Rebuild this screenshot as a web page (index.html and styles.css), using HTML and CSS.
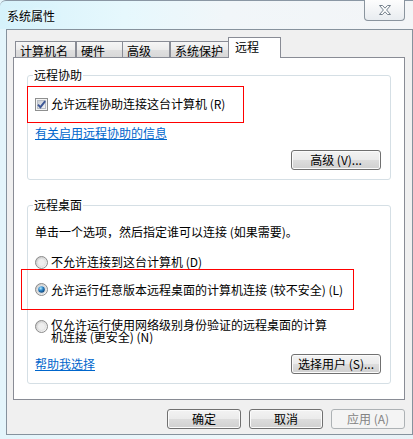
FILE: index.html
```html
<!DOCTYPE html>
<html lang="zh-CN">
<head>
<meta charset="utf-8">
<title>系统属性</title>
<link rel="stylesheet" href="styles.css">
</head>
<body>
<div class="window">
  <div class="titlebar">
    <span class="title">系统属性</span>
    <div class="close">
      <svg width="12" height="10" viewBox="0 0 12 10"><polygon points="0.5,0.5 3.5,0.5 6,3.2 8.5,0.5 11.5,0.5 7.6,5 11.5,9.5 8.5,9.5 6,6.8 3.5,9.5 0.5,9.5 4.4,5" fill="#ffffff" stroke="#74808c" stroke-width="1" stroke-linejoin="round"/></svg>
    </div>
  </div>
  <div class="client">
    <div class="tabs">
      <div class="tab t1">计算机名</div>
      <div class="tab t2">硬件</div>
      <div class="tab t3">高级</div>
      <div class="tab t4">系统保护</div>
      <div class="tab active t5">远程</div>
    </div>
    <div class="panel">
      <fieldset class="group g1">
        <legend>远程协助</legend>
        <div class="highlight hl1">
          <svg class="ctl" width="13" height="13" viewBox="0 0 13 13">
            <defs><linearGradient id="cbg" x1="0" y1="0" x2="1" y2="1"><stop offset="0" stop-color="#c5cad1"/><stop offset="1" stop-color="#f7f7f7"/></linearGradient></defs>
            <rect x="0.5" y="0.5" width="12" height="12" fill="#f4f4f4" stroke="#8e8f8f"/>
            <rect x="2.5" y="2.5" width="8" height="8" fill="url(#cbg)" stroke="#b9bec6"/>
            <path d="M3 6.6 L5.4 9.2 L10.2 3.2" fill="none" stroke="#3d5796" stroke-width="1.9"/>
          </svg>
          <span class="lbl">允许远程协助连接这台计算机 (R)</span>
        </div>
        <a class="link l1" href="#">有关启用远程协助的信息</a>
        <div class="btnrow"><button class="btn wide">高级 (V)...</button></div>
      </fieldset>
      <fieldset class="group g2">
        <legend>远程桌面</legend>
        <div class="desc">单击一个选项，然后指定谁可以连接 (如果需要)。</div>
        <div class="opt opt1">
          <svg class="ctl" width="13" height="13" viewBox="0 0 13 13">
            <defs><linearGradient id="r1" x1="0" y1="0" x2="1" y2="1"><stop offset="0" stop-color="#c4c4c4"/><stop offset="1" stop-color="#ffffff"/></linearGradient></defs>
            <circle cx="6.5" cy="6.5" r="6" fill="url(#r1)" stroke="#8b8b8b"/>
            <circle cx="6.5" cy="6.5" r="4" fill="#eeeeee" stroke="#d8d8d8" stroke-width="0.6"/>
          </svg>
          <span class="lbl">不允许连接到这台计算机 (D)</span>
        </div>
        <div class="highlight hl2">
          <svg class="ctl" width="13" height="13" viewBox="0 0 13 13">
            <defs>
              <linearGradient id="r2" x1="0" y1="0" x2="1" y2="1"><stop offset="0" stop-color="#c4c4c4"/><stop offset="1" stop-color="#ffffff"/></linearGradient>
              <radialGradient id="dot" cx="0.38" cy="0.32" r="0.75"><stop offset="0" stop-color="#b4ecff"/><stop offset="0.45" stop-color="#2f86c8"/><stop offset="1" stop-color="#0a3a6c"/></radialGradient>
            </defs>
            <circle cx="6.5" cy="6.5" r="6" fill="url(#r2)" stroke="#8b8b8b"/>
            <circle cx="6.5" cy="6.5" r="4.2" fill="#f2f2f2" stroke="#d0d0d0" stroke-width="0.6"/>
            <circle cx="6.5" cy="6.5" r="3.3" fill="url(#dot)"/>
          </svg>
          <span class="lbl">允许运行任意版本远程桌面的计算机连接 (较不安全) (L)</span>
        </div>
        <div class="opt opt3">
          <svg class="ctl" width="13" height="13" viewBox="0 0 13 13">
            <defs><linearGradient id="r3" x1="0" y1="0" x2="1" y2="1"><stop offset="0" stop-color="#c4c4c4"/><stop offset="1" stop-color="#ffffff"/></linearGradient></defs>
            <circle cx="6.5" cy="6.5" r="6" fill="url(#r3)" stroke="#8b8b8b"/>
            <circle cx="6.5" cy="6.5" r="4" fill="#eeeeee" stroke="#d8d8d8" stroke-width="0.6"/>
          </svg>
          <span class="lbl wrap">仅允许运行使用网络级别身份验证的远程桌面的计算机连接 (更安全) (N)</span>
        </div>
        <div class="row2">
          <a class="link" href="#">帮助我选择</a>
          <button class="btn wide">选择用户 (S)...</button>
        </div>
      </fieldset>
    </div>
    <div class="footer">
      <button class="btn foot">确定</button>
      <button class="btn foot">取消</button>
      <button class="btn foot" disabled>应用 (A)</button>
    </div>
  </div>
</div>
</body>
</html>
```
FILE: styles.css
```css
* { box-sizing: border-box; }
html, body { margin: 0; padding: 0; }
body {
  width: 413px;
  height: 439px;
  overflow: hidden;
  background: #e2f3f9;
  font-family: "Noto Sans CJK SC", "Noto Sans", sans-serif;
  font-size: 12px;
  color: #000;
}
.window {
  width: 413px;
  height: 439px;
  display: flex;
  flex-direction: column;
  background: linear-gradient(to right, #e4f5fb 0%, #eef7fa 60%, #e8f1f6 100%);
}
.titlebar {
  height: 29px;
  display: flex;
  justify-content: space-between;
  align-items: flex-start;
  border-top: 1px solid #8a97a4;
  border-top-left-radius: 6px;
  background: linear-gradient(to right, #d6f2fb 0%, #e6f8fd 30%, #f1f6f9 55%, #f3f5f7 100%);
}
.title {
  padding: 8px 0 0 7px;
  line-height: 14px;
  text-shadow: 0 0 5px #ffffff, 0 0 8px #ccf3ff;
}
.close {
  width: 41px;
  height: 21px;
  margin: -1px 8px 0 0;
  border: 1px solid #8a949e;
  border-top: none;
  border-radius: 0 0 4px 4px;
  background: linear-gradient(#fdfdfd, #e8ecf0);
  display: flex;
  justify-content: center;
  align-items: center;
  padding-bottom: 1px;
}
.close svg { display: block; }
.client {
  margin-left: 6px;
  width: 407px;
  height: 406px;
  border: 1px solid #86929d;
  background: #f0f0f0;
  padding-top: 7px;
}
.tabs {
  display: flex;
  align-items: flex-end;
  height: 21px;
  margin-left: 8px;
  margin-bottom: -1px;
  position: relative;
  z-index: 1;
}
.tab {
  height: 17px;
  border: 1px solid #898c95;
  padding: 2px 0 0 4px;
  line-height: 14px;
  background: linear-gradient(#f6f6f6 0%, #ececec 50%, #e0e0e0 51%, #d8d8d8 100%);
  white-space: nowrap;
}
.t1 { width: 61px; }
.t2 { width: 47px; }
.t3 { width: 48px; margin-left: -1px; }
.t4 { width: 59px; }
.tab.active {
  height: 21px;
  width: 53px;
  margin-left: -1px;
  border-bottom: none;
  background: #ffffff;
  padding: 2px 0 0 6px;
}
.panel {
  margin-left: 6px;
  width: 392px;
  height: 343px;
  border: 1px solid #898c95;
  background: #ffffff;
  padding: 11px 13px 0;
}
.group {
  margin: 0;
  padding: 0 0 9px;
  border: 1px solid #d5dfe5;
  border-radius: 3px;
  min-width: 0;
}
.group legend {
  margin-left: 5px;
  padding: 0 1px;
  line-height: 12px;
}
.g2 { margin-top: 19px; }
.ctl { display: block; flex: none; margin-right: 3px; }
.lbl { line-height: 14px; white-space: nowrap; }
.highlight {
  border: 1px solid #ff0000;
  display: flex;
  align-items: center;
}
.hl1 {
  margin-top: 5px;
  margin-left: -1px;
  width: 217px;
  height: 37px;
  padding: 0 0 1px 7px;
}
.hl2 {
  margin-left: -7px;
  width: 333px;
  height: 41px;
  padding-left: 13px;
  border: 1px solid #ff0000;
}
.link {
  color: #0066cc;
  text-decoration: underline;
  line-height: 14px;
}
.l1 {
  display: block;
  width: fit-content;
  margin: 3px 0 0 7px;
}
.btnrow {
  margin-top: 10px;
  display: flex;
  justify-content: flex-end;
  padding-right: 9px;
}
.btn {
  height: 20px;
  padding: 0;
  border: 1px solid #707070;
  border-radius: 3px;
  background: linear-gradient(#f3f3f3 0%, #ebebeb 49%, #dddddd 50%, #d0d0d0 100%);
  box-shadow: inset 0 0 0 1px #fbfbfb;
  font-family: inherit;
  font-size: 12px;
  line-height: 16px;
  color: #000;
  white-space: nowrap;
}
.btn.wide { width: 90px; }
.btn.foot { width: 74px; }
.btn:disabled {
  border-color: #adb2b5;
  background: #f4f4f4;
  box-shadow: none;
  color: #838383;
}
.desc {
  margin: 14px 0 0 7px;
  line-height: 14px;
}
.opt {
  display: flex;
  padding-left: 7px;
}
.opt1 {
  margin-top: 16px;
  height: 14px;
  align-items: center;
}
.opt3 {
  margin-top: 9px;
  align-items: flex-start;
}
.opt3 .ctl { margin-top: 1px; }
.lbl.wrap {
  white-space: normal;
  width: 280px;
  line-height: 12px;
}
.row2 {
  margin-top: 11px;
  height: 20px;
  display: flex;
  justify-content: space-between;
  align-items: center;
  padding: 0 9px 0 7px;
}
.footer {
  margin: 9px 0 0 6px;
  width: 392px;
  display: flex;
  justify-content: flex-end;
  gap: 8px;
}
```
